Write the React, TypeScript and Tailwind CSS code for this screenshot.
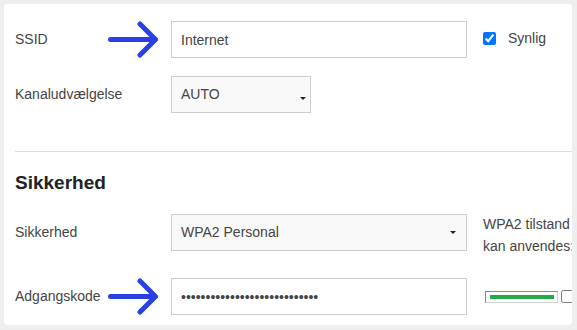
import React from "react";

const font = { fontFamily: '"Liberation Sans", Arial, sans-serif' };

const Arrow = () => (
  <svg width="54" height="37" viewBox="0 0 54 37" className="mr-[11px] shrink-0">
    <path
      d="M4.5 18.5H49M34 3L49.5 18.5L34 34"
      fill="none"
      stroke="#2b3fe6"
      strokeWidth="5"
      strokeLinecap="round"
      strokeLinejoin="round"
    />
  </svg>
);

const Caret = () => (
  <span className="block w-0 h-0 border-l-[3px] border-r-[3px] border-t-[3px] border-l-transparent border-r-transparent border-t-[#222]" />
);

const Label = ({ text, arrow }: { text: string; arrow?: boolean }) => (
  <div className="w-[156px] h-[37px] shrink-0 flex items-center justify-between text-[14px] text-[#444]">
    <span>{text}</span>
    {arrow && <Arrow />}
  </div>
);

export default function App() {
  return (
    <div className="w-[577px] h-[330px] bg-[#eeeeee] pt-[4px] pl-[4px]" style={font}>
      <div className="w-[568px] h-[321px] bg-white rounded-[4px] overflow-hidden">
        <div className="w-[700px] pl-[11px] pt-[17px]">
          {/* SSID */}
          <div className="flex items-center">
            <Label text="SSID" arrow />
            <input
              type="text"
              readOnly
              defaultValue="Internet"
              className="w-[296px] h-[37px] border border-[#cccccc] bg-white px-[9px] text-[14px] text-[#444] outline-none"
            />
            <div className="flex items-center ml-[16px] -mt-[2px]">
              <input type="checkbox" defaultChecked readOnly className="m-0 w-[13px] h-[13px]" />
              <span className="ml-[12px] text-[14px] text-[#444]">Synlig</span>
            </div>
          </div>

          {/* Kanal */}
          <div className="flex items-center mt-[18px]">
            <Label text="Kanaludvælgelse" />
            <div className="w-[140px] h-[37px] border border-[#cccccc] bg-[#f9f9f9] flex items-center justify-between pl-[9px] pr-[4px] text-[14px] text-[#444]">
              <span>AUTO</span>
              <span className="mt-[8px]">
                <Caret />
              </span>
            </div>
          </div>

          <div className="h-px bg-[#dddddd] mt-[38px]" />

          <div className="mt-[20px] h-[22px] leading-[22px] text-[19px] font-bold text-[#222]">Sikkerhed</div>

          {/* Sikkerhed */}
          <div className="flex items-start mt-[20px]">
            <Label text="Sikkerhed" />
            <div className="w-[296px] h-[37px] shrink-0 border border-[#cccccc] bg-[#f9f9f9] flex items-center justify-between pl-[9px] pr-[10px] text-[14px] text-[#444]">
              <span>WPA2 Personal</span>
              <Caret />
            </div>
            <div className="ml-[16px] -mt-[1px] text-[14px] leading-[22px] text-[#444] whitespace-nowrap">
              <div>WPA2 tilstand kræver, at alle enheder</div>
              <div>kan anvendes: alle WPA2-enheder</div>
            </div>
          </div>

          {/* Adgangskode */}
          <div className="flex items-center mt-[21px]">
            <Label text="Adgangskode" arrow />
            <input
              type="password"
              readOnly
              defaultValue="internetpassword123456789012"
              className="w-[296px] h-[37px] border border-[#cccccc] bg-white px-[9px] text-[14px] text-[#444] outline-none"
            />
            <div className="ml-[18px] w-[73px] h-[12px] border border-t-[#8a8a8a] border-l-[#8a8a8a] border-b-[#cfcfcf] border-r-[#cfcfcf] p-[3px] pl-[4px]">
              <div className="w-[64px] h-[4px] bg-[#22aa4a]" />
            </div>
            <input type="checkbox" readOnly className="m-0 ml-[3px] w-[13px] h-[13px]" />
          </div>
        </div>
      </div>
    </div>
  );
}
